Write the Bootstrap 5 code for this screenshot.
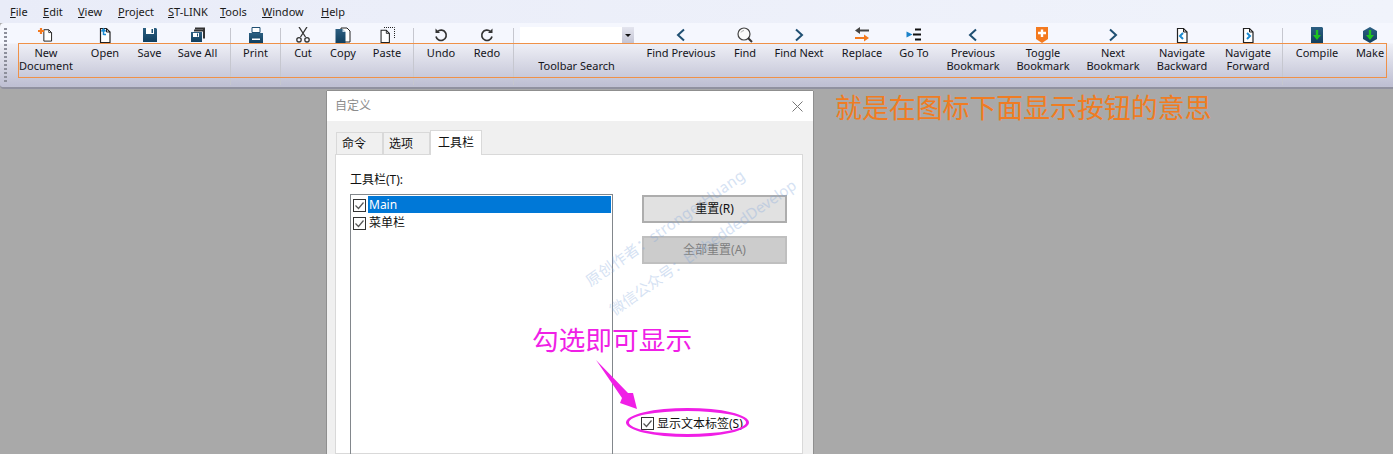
<!doctype html>
<html lang="zh">
<head>
<meta charset="utf-8">
<title>Customize toolbar</title>
<link href="https://cdn.jsdelivr.net/npm/bootstrap@5.3.0/dist/css/bootstrap.min.css" rel="stylesheet">
<style>
html,body{height:454px;overflow:hidden}
body{background:#a9a9a9;font-family:"Noto Sans","Noto Sans CJK SC",sans-serif;font-size:11px;color:#111;position:relative;width:1393px}
.menubar{height:23px;background:linear-gradient(90deg,#e9ecf8,#f0f3fb);padding-left:10px;font-size:11px;line-height:23px}
.menubar span{display:block;color:#1a1a1a}
.m-file{width:33px}.m-edit{width:35px}.m-view{width:40px}.m-proj{width:50px}.m-st{width:52px}.m-tools{width:42px}.m-win{width:59px}
.tbar{height:66px;padding-left:18px;border-bottom:2px solid #90919f;border-radius:4px 0 0 4px;background:linear-gradient(180deg,#f5f7fe 0,#f5f7fe 20px,#eeeff6 21px,#bfc0d3 62px,#c0c1d3 64px)}
.grip{position:absolute;left:4px;top:28px;width:3px;height:54px;background:repeating-linear-gradient(180deg,#8d8f9b 0,#8d8f9b 2px,transparent 2px,transparent 4px)}
.ti{flex:none;padding-top:4px;text-align:center;line-height:12.5px;color:#14141a}
.ti svg{display:block;margin:0 auto 4px}
.tsep{flex:none;width:1px;height:57px;margin-top:5px;background:#c6c7cf}
.w-new{width:56px}.w-open{width:62px}.w-save{width:27px}.w-all{width:67px;padding-left:2px}.w-print{width:49px}.w-cut{width:44px}.w-copy{width:36px}.w-paste{width:52px}.w-undo{width:54px}.w-redo{width:38px;margin-right:7px}
.w-search{width:113px;margin-left:6px}
.w-fp{width:96px}.w-find{width:32px}.w-fn{width:76px}.w-rep{width:50px}.w-go{width:54px}.w-pb{width:64px}.w-tb{width:76px}.w-nb{width:64px}.w-nav{width:74px}.w-fwd{width:58px;margin-right:5px}.w-comp{width:68px}.w-make{width:38px}
.combo{height:16px;background:#fff;width:114px;justify-content:flex-end}
.combo i{display:flex;width:12px;height:16px;align-items:center;justify-content:center;background:linear-gradient(180deg,#e4e5ef,#c3c4d4)}
.combo i::before{content:"";border:3px solid transparent;border-top:3px solid #111;border-bottom:0}
.search-lab{margin-top:17px;display:block}
.orange-box{position:absolute;left:18px;top:43px;width:1369px;height:35px;border:1px solid #ef9148}
.dlg{margin:2px 0 0 327px;width:486px;height:363px;background:#f0f0f0;box-shadow:-1px 0 0 #8f8f8f,0 -1px 0 #8f8f8f,1px 0 0 #8f8f8f;font-family:"Noto Sans","Noto Sans CJK SC",sans-serif;font-size:12px;color:#111}
.dlg-title{height:30px;background:#fff;padding:0 8px;color:#8c8c8c;line-height:30px}
.dlg-x{width:11px;height:11px;margin-right:2px}
.tabsrow{padding:8px 0 0 9px;height:33px;align-items:flex-end;border:0}
.tabsrow .nav-link{font-size:12px;color:#111;border:1px solid #d9d9d9;border-bottom:0;border-radius:0;margin:0;background:#f0f0f0;padding:0 0 0 5px;height:22px;line-height:21px;text-align:left;width:47px}
.tabsrow .nav-link.active{background:#fff;height:25px;width:52px;border-color:#d9d9d9;color:#111;margin-bottom:-1px;position:relative;z-index:1;line-height:24px;padding:0;text-align:center}
.pane{margin-left:8px;width:468px;height:300px;background:#fff;border:1px solid #d9d9d9;padding:15px 0 0 14px}
.lab{line-height:19px;height:24px}
.lbox{width:263px;height:280px;border:1px solid #82878c;padding:1px 1px 0 2px}
.lrow{height:18px;line-height:17px}
.lrow.sel{height:17px;margin-bottom:1px}
.lrow.sel .lt{background:#0078d7;color:#fff}
.lt{flex:1;padding-left:1px;margin-left:2px}
.ck{flex:none;width:13px;height:13px}
.lrow .ck{margin-top:3px}
.rcol{margin-left:29px;width:145px;padding-top:25px}
.dbtn{display:block;width:145px;height:28px;padding:0;font-size:12px;line-height:24px;border-radius:0;border:2px solid #adadad;background:#e1e1e1;color:#111;margin-bottom:13px}
.dbtn:disabled{background:#ccc;border-color:#bfbfbf;color:#7f7f7f;opacity:1}
.showlab{margin:153px 0 0 -1px;line-height:13px;height:13px}
.showlab span{margin-left:3px;white-space:nowrap}
.note-o{position:absolute;left:835px;top:90px;font-size:26.9px;line-height:36px;color:#f07c22;white-space:nowrap}
.note-m{position:absolute;left:532px;top:320px;font-size:26.7px;line-height:40px;color:#f01fe6;white-space:nowrap}
.ring{position:absolute;left:626px;top:408px;width:123px;height:29px;border:3px solid #f01fe6;border-radius:50%}
.arrow-svg{position:absolute;left:590px;top:355px}
.wm{position:absolute;color:#7fa6dc;opacity:.32;font-size:15px;white-space:nowrap;transform-origin:0 50%;transform:rotate(-35deg);line-height:18px}
.wm1{left:587px;top:273px;letter-spacing:.4px}
.wm2{left:611px;top:302px}
</style>
</head>
<body>
<svg width="0" height="0" class="position-absolute">
<defs>
<linearGradient id="bl" x1="0" y1="0" x2="0" y2="1"><stop offset="0" stop-color="#2c5f82"/><stop offset="1" stop-color="#113f5e"/></linearGradient>
<symbol id="doc" viewBox="0 0 16 16"><path d="M3.5 1.5h6l3.5 3.5v10.5h-9.500z" fill="#fff" stroke="#222" stroke-width="1.200"/><path d="M9.500 1.500v3.500h3.500" fill="none" stroke="#222"/></symbol>
</defs>
</svg>
<div class="menubar d-flex">
<span class="m-file"><u>F</u>ile</span><span class="m-edit"><u>E</u>dit</span><span class="m-view"><u>V</u>iew</span><span class="m-proj"><u>P</u>roject</span><span class="m-st"><u>S</u>T-LINK</span><span class="m-tools"><u>T</u>ools</span><span class="m-win"><u>W</u>indow</span><span><u>H</u>elp</span>
</div>
<div class="tbar d-flex">
<div class="ti w-new"><svg width="16" height="16" viewBox="0 0 16 16"><use href="#doc" x="3" width="13" height="16"/><path d="M0 4h6M3 1v6" stroke="#f47a1f" stroke-width="2.200"/></svg>New<br>Document</div>
<div class="ti w-open"><svg width="16" height="16" viewBox="0 0 16 16"><use href="#doc" width="16" height="16"/><path d="M6.500 8V2.500M4.500 4.500l2-2.500 2 2.500M6.500 7.500h2.500" fill="none" stroke="#1b8ad0" stroke-width="1.500"/></svg>Open</div>
<div class="ti w-save"><svg width="16" height="16" viewBox="0 0 16 16"><path d="M1 1h13l1 1v13H1z" fill="url(#bl)"/><path d="M4 1h8v6H4z" fill="#fff"/><path d="M9.500 2h1.500v4H9.500z" fill="#1c4f73"/></svg>Save</div>
<div class="ti w-all"><svg width="16" height="16" viewBox="0 0 16 16"><path d="M5 0.500h10v11h-2V2.500H5z" fill="#333"/><path d="M4 2.500h9v2H4z" fill="#333"/><path d="M1 5h11v10H1z" fill="url(#bl)"/><path d="M3 6h6v4H3z" fill="#fff"/><path d="M7 6.500h1v3H7z" fill="#1c4f73"/></svg>Save All</div>
<div class="tsep"></div>
<div class="ti w-print"><svg width="16" height="16" viewBox="0 0 16 16"><path d="M4 .5h8v5H4z" fill="#fff" stroke="#1f4f72"/><path d="M1 6h14v10H1z" fill="url(#bl)"/><path d="M4 11.500h8v1.500H4z" fill="#fff"/></svg>Print</div>
<div class="tsep"></div>
<div class="ti w-cut"><svg width="16" height="16" viewBox="0 0 16 16"><path d="M4 0l6.500 10M12 0L5.500 10" stroke="#333" stroke-width="1.300"/><circle cx="4" cy="12.800" r="2.200" fill="none" stroke="#333" stroke-width="1.300"/><circle cx="12" cy="12.800" r="2.200" fill="none" stroke="#333" stroke-width="1.300"/></svg>Cut</div>
<div class="ti w-copy"><svg width="16" height="16" viewBox="0 0 16 16"><path d="M6 1h6l3 3v11H6z" fill="#fff" stroke="#222"/><path d="M.5 2h7l3 3v11h-10z" fill="url(#bl)"/><path d="M7.500 2v3h3" fill="#c9dbe8"/></svg>Copy</div>
<div class="ti w-paste"><svg width="16" height="16" viewBox="0 0 16 16"><path d="M5 .5h10.500V12" fill="none" stroke="#222" stroke-dasharray="1 1"/><use href="#doc" x="-1" y="2" width="14" height="14"/></svg>Paste</div>
<div class="tsep"></div>
<div class="ti w-undo"><svg width="16" height="16" viewBox="0 0 16 16"><path d="M4.500 4.500A5.200 5.200 0 1 1 3 9.500" fill="none" stroke="#333" stroke-width="1.700"/><path d="M2.500 1.500v4.500H7z" fill="#333"/></svg>Undo</div>
<div class="ti w-redo"><svg width="16" height="16" viewBox="0 0 16 16"><path d="M11.500 4.500A5.200 5.200 0 1 0 13 9.500" fill="none" stroke="#333" stroke-width="1.700"/><path d="M13.500 1.500v4.500H9z" fill="#333"/></svg>Redo</div>
<div class="tsep"></div>
<div class="ti w-search"><div class="combo d-flex"><i></i></div><span class="search-lab">Toolbar Search</span></div>
<div class="ti w-fp"><svg width="16" height="16" viewBox="0 0 16 16"><path d="M11 2.500L5 8l6 5.500" fill="none" stroke="#1f4f72" stroke-width="2"/></svg>Find Previous</div>
<div class="ti w-find"><svg width="16" height="16" viewBox="0 0 16 16"><circle cx="7" cy="7" r="6" fill="#fbfbfb" stroke="#444" stroke-width="1.200"/><path d="M4 5.500A3.500 3.500 0 0 1 7 3.500" fill="none" stroke="#aaa"/><path d="M11 11l4 4" stroke="#333" stroke-width="2"/></svg>Find</div>
<div class="ti w-fn"><svg width="16" height="16" viewBox="0 0 16 16"><path d="M5 2.500L11 8l-6 5.500" fill="none" stroke="#1f4f72" stroke-width="2"/></svg>Find Next</div>
<div class="ti w-rep"><svg width="16" height="16" viewBox="0 0 16 16"><path d="M5 2.500h10v2H5z" fill="#444"/><path d="M1 3.500l5-3.500v7z" fill="#444"/><path d="M1 10h10v2H1z" fill="#f47a1f"/><path d="M15 11l-5-3.500v7z" fill="#f47a1f"/></svg>Replace</div>
<div class="ti w-go"><svg width="16" height="16" viewBox="0 0 16 16"><path d="M.5 4.500l6 3-6 3z" fill="#1b82c9"/><path d="M9 1.500h6v2H9zM7 6.500h8v2H7zM9 11.500h6v2H9z" fill="#111"/></svg>Go To</div>
<div class="ti w-pb"><svg width="16" height="16" viewBox="0 0 16 16"><path d="M11 2.500L5 8l6 5.500" fill="none" stroke="#1f4f72" stroke-width="2"/></svg>Previous<br>Bookmark</div>
<div class="ti w-tb"><svg width="16" height="16" viewBox="0 0 16 16"><path d="M1 0h12v12l-6 4-6-4z" fill="#f47a1f"/><path d="M3 6h8M7 2.500v7.500" stroke="#fff" stroke-width="2.400"/></svg>Toggle<br>Bookmark</div>
<div class="ti w-nb"><svg width="16" height="16" viewBox="0 0 16 16"><path d="M5 2.500L11 8l-6 5.500" fill="none" stroke="#1f4f72" stroke-width="2"/></svg>Next<br>Bookmark</div>
<div class="ti w-nav"><svg width="16" height="16" viewBox="0 0 16 16"><use href="#doc" width="16" height="16"/><path d="M9 6L6 9l3 3" fill="none" stroke="#1b8ad0" stroke-width="2"/></svg>Navigate<br>Backward</div>
<div class="ti w-fwd"><svg width="16" height="16" viewBox="0 0 16 16"><use href="#doc" width="16" height="16"/><path d="M7 6l3 3-3 3" fill="none" stroke="#1b8ad0" stroke-width="2"/></svg>Navigate<br>Forward</div>
<div class="tsep"></div>
<div class="ti w-comp"><svg width="16" height="16" viewBox="0 0 16 16"><path d="M2 0h11l1 1v15H2z" fill="url(#bl)"/><path d="M6.800 3h2.400v5H12l-4 5-4-5h2.800z" fill="#1fc41f"/></svg>Compile</div>
<div class="ti w-make"><svg width="16" height="16" viewBox="0 0 16 16"><path d="M8 0l7 4v8l-7 4-7-4V4z" fill="url(#bl)"/><path d="M6.800 3h2.400v5H12l-4 5-4-5h2.800z" fill="#1fc41f"/></svg>Make</div>
</div>
<div class="grip"></div>
<div class="orange-box"></div>

<div class="dlg">
<div class="dlg-title d-flex justify-content-between align-items-center"><span>自定义</span><svg class="dlg-x" viewBox="0 0 11 11"><path d="M.5.5l10 10M10.500.5l-10 10" stroke="#777" fill="none"/></svg></div>
<ul class="nav nav-tabs tabsrow">
<li class="nav-item"><a class="nav-link" href="#">命令</a></li>
<li class="nav-item"><a class="nav-link" href="#">选项</a></li>
<li class="nav-item"><a class="nav-link active" href="#">工具栏</a></li>
</ul>
<div class="pane d-flex">
<div>
<div class="lab">工具栏(T):</div>
<div class="lbox">
<div class="lrow sel d-flex"><svg class="ck" viewBox="0 0 13 13"><rect x=".5" y=".5" width="12" height="12" fill="#fff" stroke="#333"/><path d="M2.500 6.500l3 3 5-6" fill="none" stroke="#555" stroke-width="1.200"/></svg><span class="lt">Main</span></div>
<div class="lrow d-flex"><svg class="ck" viewBox="0 0 13 13"><rect x=".5" y=".5" width="12" height="12" fill="#fff" stroke="#333"/><path d="M2.500 6.500l3 3 5-6" fill="none" stroke="#555" stroke-width="1.200"/></svg><span class="lt">菜单栏</span></div>
</div>
</div>
<div class="rcol">
<button class="btn dbtn" type="button">重置(R)</button>
<button class="btn dbtn" type="button" disabled>全部重置(A)</button>
<div class="showlab d-flex"><svg class="ck" viewBox="0 0 13 13"><rect x=".5" y=".5" width="12" height="12" fill="#fff" stroke="#333"/><path d="M2.500 6.500l3 3 5-6" fill="none" stroke="#555" stroke-width="1.200"/></svg><span>显示文本标签(S)</span></div>
</div>
</div>
</div>

<div class="wm wm1">原创作者：strongerHuang</div>
<div class="wm wm2">微信公众号：EmbeddedDevelop</div>
<div class="note-o">就是在图标下面显示按钮的意思</div>
<div class="note-m">勾选即可显示</div>
<svg class="arrow-svg" width="52" height="58" viewBox="0 0 52 58"><path d="M6 5L38 38l5 0 4 16-17-6 2-5z" fill="#f01fe6"/></svg>
<div class="ring"></div>
<script src="https://cdn.jsdelivr.net/npm/bootstrap@5.3.0/dist/js/bootstrap.bundle.min.js"></script>
</body>
</html>
